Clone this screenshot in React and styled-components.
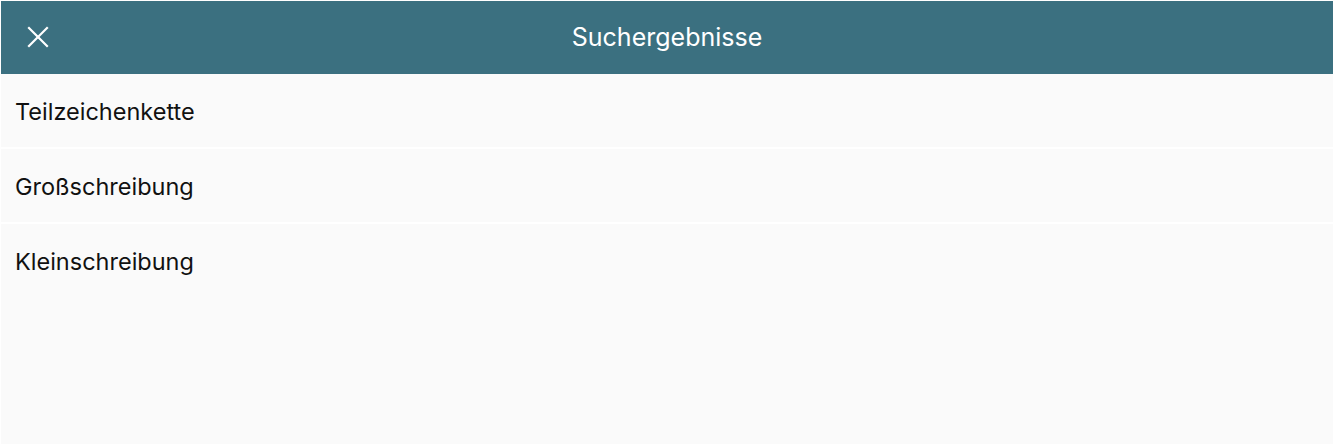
import React from 'react';
import styled, { createGlobalStyle } from 'styled-components';

const Global = createGlobalStyle`
  html, body {
    margin: 0;
    padding: 0;
    background: #ffffff;
  }
  body {
    font-family: Inter, "Noto Sans", sans-serif;
  }
`

const Frame = styled.div`
  width: 1334px;
  height: 445px;
  box-sizing: border-box;
  padding: 1px;
  background: #ffffff;
`

const Panel = styled.div`
  height: 100%;
  display: flex;
  flex-direction: column;
  background: #fafafa;
`

const Header = styled.header`
  height: 73px;
  box-sizing: border-box;
  padding-bottom: 2px;
  flex: none;
  display: flex;
  align-items: center;
  justify-content: center;
  position: relative;
  background: #3b7080;
  color: #ffffff;
`

const CloseButton = styled.button`
  position: absolute;
  left: 22px;
  top: 21px;
  width: 30px;
  height: 30px;
  padding: 0;
  border: none;
  background: none;
  display: flex;
  align-items: center;
  justify-content: center;
  color: #ffffff;
  cursor: pointer;
`

const Title = styled.h1`
  margin: 0;
  font-size: 25px;
  font-weight: 400;
`

const List = styled.ul`
  list-style: none;
  margin: 0;
  padding: 0;
  display: flex;
  flex-direction: column;
`

const Item = styled.li`
  height: 75px;
  box-sizing: border-box;
  display: flex;
  align-items: center;
  padding: 2px 0 0 14px;
  font-size: 23.5px;
  color: #111111;
  border-bottom: 2px solid #ffffff;
  &:last-child {
    border-bottom-color: transparent;
  }
`

const items = ['Teilzeichenkette', 'Großschreibung', 'Kleinschreibung'];

const App = () => {
  return (
    <Frame>
      <Global />
      <Panel>
        <Header>
          <CloseButton aria-label="Schließen">
            <svg width="22" height="22" viewBox="0 0 22 22" fill="none" stroke="currentColor" strokeWidth="2.2" strokeLinecap="square">
              <line x1="2" y1="2" x2="20" y2="20" />
              <line x1="20" y1="2" x2="2" y2="20" />
            </svg>
          </CloseButton>
          <Title>Suchergebnisse</Title>
        </Header>
        <List>
          {items.map((t) => (
            <Item key={t}>{t}</Item>
          ))}
        </List>
      </Panel>
    </Frame>
  );
};

export default App;
